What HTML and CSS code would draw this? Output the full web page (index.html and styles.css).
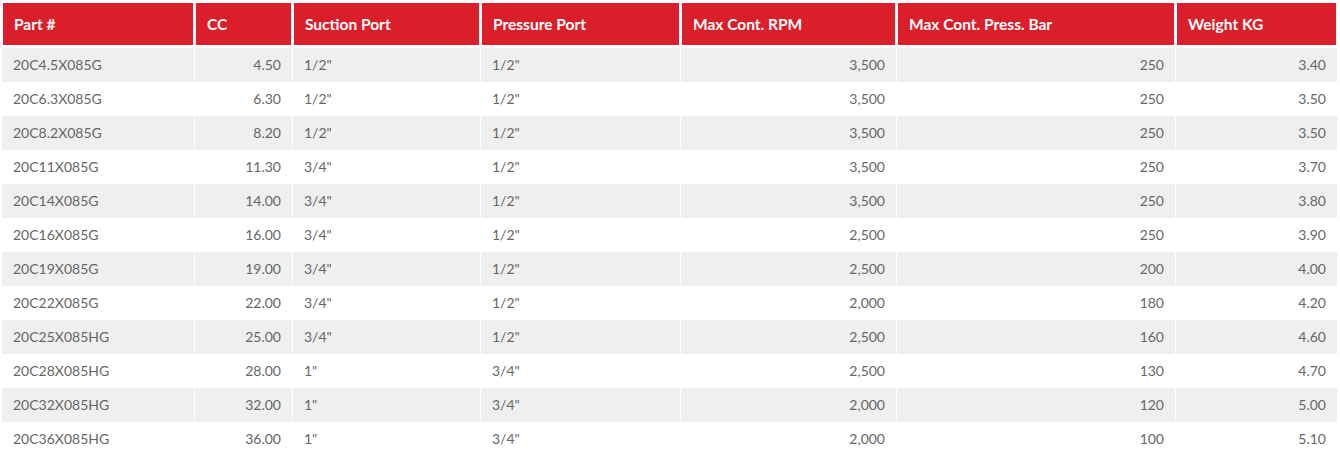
FILE: index.html
```html
<!DOCTYPE html>
<html lang="en">
<head>
<meta charset="utf-8">
<title>Pump specifications</title>
<link rel="stylesheet" href="styles.css">
</head>
<body>
<div class="wrap">
<table class="spec">
  <colgroup>
    <col class="c1"><col class="c2"><col class="c3"><col class="c4"><col class="c5"><col class="c6"><col class="c7">
  </colgroup>
  <thead>
    <tr><th>Part #</th><th>CC</th><th>Suction Port</th><th>Pressure Port</th><th>Max Cont. RPM</th><th>Max Cont. Press. Bar</th><th>Weight KG</th></tr>
  </thead>
  <tbody>
    <tr><td>20C4.5X085G</td><td class="r">4.50</td><td>1/2"</td><td>1/2"</td><td class="r">3,500</td><td class="r">250</td><td class="r">3.40</td></tr>
    <tr><td>20C6.3X085G</td><td class="r">6.30</td><td>1/2"</td><td>1/2"</td><td class="r">3,500</td><td class="r">250</td><td class="r">3.50</td></tr>
    <tr><td>20C8.2X085G</td><td class="r">8.20</td><td>1/2"</td><td>1/2"</td><td class="r">3,500</td><td class="r">250</td><td class="r">3.50</td></tr>
    <tr><td>20C11X085G</td><td class="r">11.30</td><td>3/4"</td><td>1/2"</td><td class="r">3,500</td><td class="r">250</td><td class="r">3.70</td></tr>
    <tr><td>20C14X085G</td><td class="r">14.00</td><td>3/4"</td><td>1/2"</td><td class="r">3,500</td><td class="r">250</td><td class="r">3.80</td></tr>
    <tr><td>20C16X085G</td><td class="r">16.00</td><td>3/4"</td><td>1/2"</td><td class="r">2,500</td><td class="r">250</td><td class="r">3.90</td></tr>
    <tr><td>20C19X085G</td><td class="r">19.00</td><td>3/4"</td><td>1/2"</td><td class="r">2,500</td><td class="r">200</td><td class="r">4.00</td></tr>
    <tr><td>20C22X085G</td><td class="r">22.00</td><td>3/4"</td><td>1/2"</td><td class="r">2,000</td><td class="r">180</td><td class="r">4.20</td></tr>
    <tr><td>20C25X085HG</td><td class="r">25.00</td><td>3/4"</td><td>1/2"</td><td class="r">2,500</td><td class="r">160</td><td class="r">4.60</td></tr>
    <tr><td>20C28X085HG</td><td class="r">28.00</td><td>1"</td><td>3/4"</td><td class="r">2,500</td><td class="r">130</td><td class="r">4.70</td></tr>
    <tr><td>20C32X085HG</td><td class="r">32.00</td><td>1"</td><td>3/4"</td><td class="r">2,000</td><td class="r">120</td><td class="r">5.00</td></tr>
    <tr><td>20C36X085HG</td><td class="r">36.00</td><td>1"</td><td>3/4"</td><td class="r">2,000</td><td class="r">100</td><td class="r">5.10</td></tr>
  </tbody>
</table>
</div>
</body>
</html>
```

FILE: styles.css
```css
html, body {
  margin: 0;
  padding: 0;
  background: #fff;
}
.wrap {
  padding: 2px;
}
.spec {
  width: 1336px;
  table-layout: fixed;
  border-collapse: separate;
  border-spacing: 0;
  font-family: "Lato", "Liberation Sans", sans-serif;
  font-size: 14px;
}
.c1 { width: 193px; }
.c2 { width: 98px; }
.c3 { width: 188px; }
.c4 { width: 200px; }
.c5 { width: 216px; }
.c6 { width: 279px; }
.c7 { width: 162px; }
.spec th {
  background: #da1f2a;
  color: #fff;
  font-size: 15.5px;
  font-weight: 700;
  text-align: left;
  height: 42px;
  padding: 0 10px 0 11px;
  border-left: 1px solid #fff;
  border-right: 2px solid #fff;
  border-top: 1px solid #fff;
  border-bottom: 3px solid #fff;
  box-sizing: content-box;
  line-height: 18px;
}
.spec td {
  height: 34px;
  padding: 0 11px 0 11px;
  color: #666;
  line-height: 18px;
  border-right: 1px solid #fff;
  white-space: nowrap;
}
.spec td.r {
  text-align: right;
}
.spec tbody tr:nth-child(odd) td {
  background: #efefef;
}
```
